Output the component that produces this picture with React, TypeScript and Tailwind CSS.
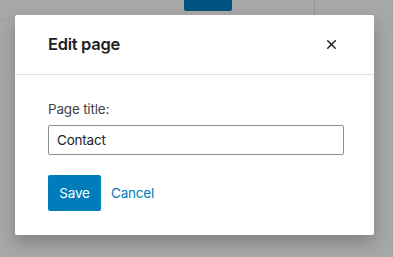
import { X } from "lucide-react";

export default function App() {
  return (
    <div
      className="relative h-[257px] w-[393px] overflow-hidden bg-[#a7a7a7]"
      style={{ fontFamily: "Inter, 'Noto Sans', sans-serif" }}
    >
      {/* page behind the overlay */}
      <div className="absolute left-[184px] top-0 h-[11px] w-[48px] rounded-b-[2px] bg-[#00547f]" />
      <div className="absolute left-[314px] top-0 h-[15px] w-px bg-[#959595]" />
      <div className="absolute left-0 top-[19px] h-px w-[15px] bg-[#9d9d9d]" />

      <div className="relative pl-[15px] pt-[15px]">
        <div className="w-[359px] rounded-[2px] bg-white shadow-[0_8px_16px_rgba(0,0,0,0.22)]">
          <div className="flex h-[60px] items-center justify-between border-b border-[#e0e0e0] pl-[33px] pr-[35px]">
            <h1 className="text-[16.5px] font-semibold tracking-[-0.3px] text-[#1e1e1e]">Edit page</h1>
            <X className="h-[15px] w-[15px] text-[#1e1e1e]" strokeWidth={2.2} />
          </div>

          <div className="px-[33px] pb-[24px] pt-[24px]">
            <label className="block text-[13.5px] leading-[20px] tracking-[-0.2px] text-[#3c434a]">
              Page title:
            </label>
            <input
              defaultValue="Contact"
              className="mt-[6px] h-[30px] w-[296px] rounded-[2px] border border-[#8c8f94] px-[8px] text-[13.5px] tracking-[-0.2px] text-[#1e1e1e] outline-none"
            />
            <div className="mt-[20px] flex items-center gap-[10px]">
              <button className="h-[36px] w-[53px] rounded-[2px] bg-[#007cba] text-[13.5px] tracking-[-0.2px] text-white">
                Save
              </button>
              <button className="text-[13.5px] tracking-[-0.2px] text-[#007cba]">Cancel</button>
            </div>
          </div>
        </div>
      </div>
    </div>
  );
}
